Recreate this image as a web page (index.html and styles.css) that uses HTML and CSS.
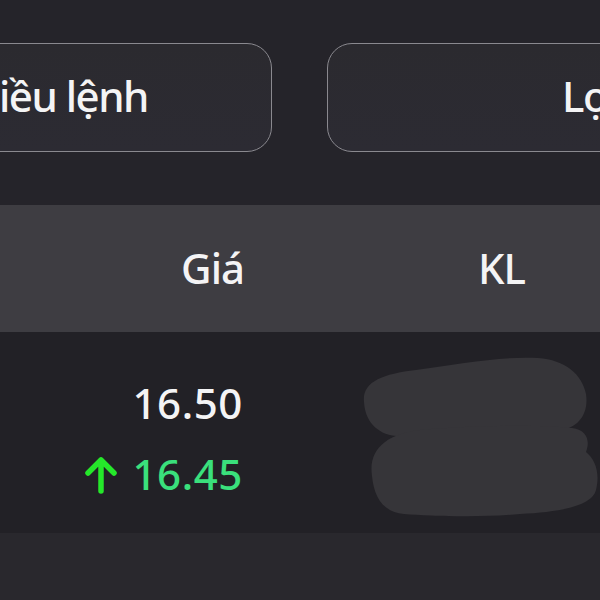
FILE: index.html
```html
<!DOCTYPE html>
<html lang="vi">
<head>
<meta charset="utf-8">
<title>Lệnh</title>
<link rel="stylesheet" href="styles.css">
</head>
<body>
<div class="page">
  <div class="toolbar">
    <div class="btn btn-left">iều lệnh</div>
    <div class="btn btn-right">Lọ</div>
  </div>
  <div class="table-head">
    <div class="col-price">Giá</div>
    <div class="col-vol">KL</div>
  </div>
  <div class="table-row">
    <div class="col-price">
      <div class="val">16.50</div>
      <div class="val up">
        <svg class="arrow" width="34" height="38" viewBox="0 0 34 38"><path d="M17 4 V35 M4 17 L17 4 L30 17" fill="none" stroke="#25e82a" stroke-width="5.5" stroke-linecap="round" stroke-linejoin="round"/></svg><span>16.45</span>
      </div>
    </div>
    <svg class="blur" width="240" height="165" viewBox="0 0 240 165">
      <path d="M4 46 C2 26 22 18 56 14 C100 8 140 0 178 2 C205 4 222 18 226 38 C229 58 218 72 200 74 C150 78 70 80 36 80 C16 78 5 64 4 46 Z" fill="#363539"/>
      <path d="M12 120 C8 92 28 78 60 74 C110 70 170 68 212 72 C228 74 230 86 226 96 C236 104 240 118 236 134 C232 150 200 156 160 158 C120 162 70 160 44 158 C22 156 14 140 12 120 Z" fill="#363539"/>
    </svg>
  </div>
  <div class="footer"></div>
</div>
</body>
</html>
```
FILE: styles.css
```css
* { box-sizing: border-box; }
html, body {
  margin: 0;
  padding: 0;
  background: #25242a;
}
body {
  font-family: "Noto Sans", "Open Sans", sans-serif;
  font-size: 42px;
  font-weight: 500;
  color: #f4f4f5;
  overflow: hidden;
}
.page {
  width: 600px;
  height: 600px;
  overflow: hidden;
  display: flex;
  flex-direction: column;
}
.toolbar {
  display: flex;
  gap: 55px;
  margin-left: -30px;
  padding-top: 43px;
  height: 205px;
  width: 700px;
}
.btn {
  height: 109px;
  border: 1.5px solid #8a898f;
  border-radius: 25px;
  background: linear-gradient(180deg, #2b2a2f 0%, #2c2b33 100%);
  display: flex;
  align-items: center;
  line-height: 57px;
  padding-bottom: 4px;
  white-space: nowrap;
  letter-spacing: -1.5px;
}
.btn-left {
  width: 302px;
  padding-left: 28px;
}
.btn-right {
  width: 330px;
  padding-left: 234px;
}
.table-head {
  height: 127px;
  background: #3e3d42;
  display: flex;
  padding-top: 34px;
  line-height: 57px;
  letter-spacing: -1px;
}
.col-price {
  width: 244px;
  text-align: right;
}
.col-vol {
  padding-left: 234px;
}
.table-row {
  position: relative;
  height: 201px;
  background: #222126;
  display: flex;
  padding-top: 42px;
  line-height: 57px;
}
.table-row .col-price {
  display: flex;
  flex-direction: column;
  align-items: flex-end;
  gap: 14px;
  padding-right: 1px;
}
.val {
  letter-spacing: 0.6px;
}
.val.up {
  color: #3ae07c;
  display: flex;
  align-items: center;
}
.arrow {
  margin-right: 14px;
  margin-top: 2px;
}
.blur {
  position: absolute;
  left: 360px;
  top: 24px;
}
.footer {
  flex: 1;
  background: #29282d;
}
```
